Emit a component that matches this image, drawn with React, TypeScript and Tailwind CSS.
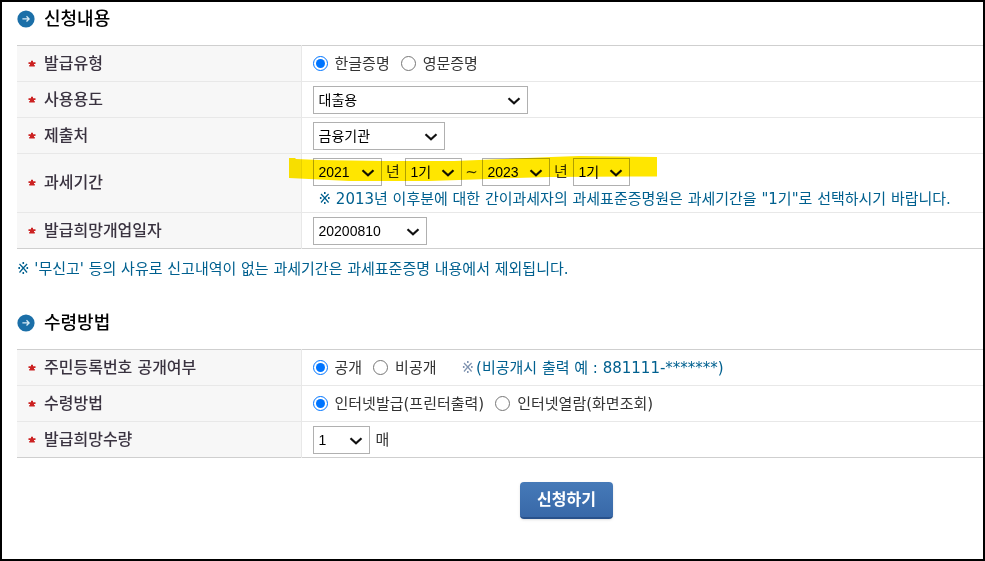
import { useState } from "react";
import type { ReactNode } from "react";

interface SelectProps {
  label: string;
  options: string[];
  className: string;
}

const Select = ({ label, options, className }: SelectProps) => {
  const [value, setValue] = useState(options[0]);

  return (
    <span className={`relative inline-flex h-7 ${className}`}>
      <select
        aria-label={label}
        value={value}
        onChange={(e) => setValue(e.target.value)}
        className="h-full w-full appearance-none border border-[#b0b0b0] bg-white pl-[5px] pr-5 font-['Liberation_Sans','Noto_Sans_CJK_KR',sans-serif] text-sm text-black"
      >
        {options.map((option) => (
          <option key={option}>{option}</option>
        ))}
      </select>
      <svg
        viewBox="0 0 14 8"
        className="pointer-events-none absolute right-[7px] top-[11px] h-2 w-3.5"
        fill="none"
        stroke="#111"
        strokeWidth="2.2"
      >
        <path d="M1.5 1.2 L7 6.2 L12.5 1.2" />
      </svg>
    </span>
  );
};

interface RadioProps {
  name: string;
  label: string;
  defaultChecked?: boolean;
}

const Radio = ({ name, label, defaultChecked }: RadioProps) => (
  <label className="flex items-center gap-[7px]">
    <input
      type="radio"
      name={name}
      defaultChecked={defaultChecked}
      className="h-[15px] w-[15px]"
    />
    {label}
  </label>
);

const SectionTitle = ({ children }: { children: ReactNode }) => (
  <h2 className="flex h-6 items-center gap-[9px] text-lg font-medium leading-6 text-black">
    <svg viewBox="0 0 18 18" className="h-[18px] w-[18px]">
      <circle cx="9" cy="9" r="8.6" fill="#1b6fa8" />
      <path
        d="M5.4 8.9 H12 M9.5 6.3 L12.1 8.9 L9.5 11.5"
        fill="none"
        stroke="#d9ecf6"
        strokeWidth="1.3"
      />
    </svg>
    {children}
  </h2>
);

const Row = ({ title, children }: { title: string; children: ReactNode }) => (
  <tr className="h-9 border-b border-[#e8e8e8] last:border-[#cfcfcf]">
    <th
      scope="row"
      className="w-[284px] border-r border-[#e8e8e8] bg-[#f7f7f7] pl-[11px] text-left text-base font-medium leading-6 text-[#3a3340]"
    >
      <span className="flex items-center gap-2">
        <svg viewBox="0 0 8 8" className="h-2 w-2" fill="#cc2222">
          <path d="M3 0.8 H5 V2.2 H7.5 V4 H6 V5 H6.8 V6.5 H1.2 V5 H2 V4 H0.5 V2.2 H3 Z" />
        </svg>
        {title}
      </span>
    </th>
    <td className="pl-[11px]">{children}</td>
  </tr>
);

const FormTable = ({ children }: { children: ReactNode }) => (
  <table className="w-full border-collapse border-t border-[#cfcfcf] text-[15px] leading-5 text-[#333]">
    <tbody>{children}</tbody>
  </table>
);

export default function App() {
  return (
    <main className="min-h-screen border-2 border-black bg-white pl-[15px] pt-[5px] font-['DejaVu_Sans','Noto_Sans_CJK_KR',sans-serif]">
      <form onSubmit={(e) => e.preventDefault()}>
        <SectionTitle>신청내용</SectionTitle>
        <div className="mt-3.5">
          <FormTable>
            <Row title="발급유형">
              <div className="flex items-center gap-[11px]">
                <Radio name="type" label="한글증명" defaultChecked />
                <Radio name="type" label="영문증명" />
              </div>
            </Row>
            <Row title="사용용도">
              <div className="flex">
                <Select
                  label="사용용도"
                  options={["대출용"]}
                  className="w-[215px]"
                />
              </div>
            </Row>
            <Row title="제출처">
              <div className="flex">
                <Select
                  label="제출처"
                  options={["금융기관"]}
                  className="w-[132px]"
                />
              </div>
            </Row>
            <Row title="과세기간">
              <div className="relative flex items-center pt-1">
                <Select
                  label="시작 연도"
                  options={["2021", "2022", "2023"]}
                  className="w-[69px]"
                />
                <span className="w-[23px] text-center">년</span>
                <Select
                  label="시작 기수"
                  options={["1기", "2기"]}
                  className="w-[57px]"
                />
                <span className="w-5 text-center">~</span>
                <Select
                  label="종료 연도"
                  options={["2023", "2022", "2021"]}
                  className="w-[68px]"
                />
                <span className="w-[23px] text-center">년</span>
                <Select
                  label="종료 기수"
                  options={["1기", "2기"]}
                  className="w-[57px]"
                />
                {/* marker stroke over the period selects */}
                <svg
                  viewBox="0 0 368 26"
                  className="pointer-events-none absolute -left-6 top-0.5 h-[26px] w-[368px] mix-blend-multiply"
                  fill="#ffe600"
                >
                  <path d="M0 2 L6 2 L7 3 L30 4 L95 5 L165 5 L215 3 L262 1 L290 0 L368 1 V20.500 H340 L260 21 L200 23 L140 25 L60 25 L0 22 Z" />
                </svg>
              </div>
              <p className="py-[3px] pl-1.5 text-[#00608f]">
                ※ 2013년 이후분에 대한 간이과세자의 과세표준증명원은 과세기간을
                "1기"로 선택하시기 바랍니다.
              </p>
            </Row>
            <Row title="발급희망개업일자">
              <div className="flex">
                <Select
                  label="발급희망개업일자"
                  options={["20200810"]}
                  className="w-[114px]"
                />
              </div>
            </Row>
          </FormTable>
        </div>
        <p className="mt-2.5 text-[15px] leading-5 text-[#00608f]">
          ※ '무신고' 등의 사유로 신고내역이 없는 과세기간은 과세표준증명
          내용에서 제외됩니다.
        </p>

        <div className="mt-8">
          <SectionTitle>수령방법</SectionTitle>
        </div>
        <div className="mt-3.5">
          <FormTable>
            <Row title="주민등록번호 공개여부">
              <div className="flex items-center gap-[11px]">
                <Radio name="open" label="공개" defaultChecked />
                <Radio name="open" label="비공개" />
                <span className="flex gap-0.5 pl-3.5 text-[#00608f]">
                  <span className="text-[#7f93b0]">※</span>
                  (비공개시 출력 예 : 881111-*******)
                </span>
              </div>
            </Row>
            <Row title="수령방법">
              <div className="flex items-center gap-[11px]">
                <Radio
                  name="method"
                  label="인터넷발급(프린터출력)"
                  defaultChecked
                />
                <Radio name="method" label="인터넷열람(화면조회)" />
              </div>
            </Row>
            <Row title="발급희망수량">
              <div className="flex items-center gap-1.5">
                <Select
                  label="발급희망수량"
                  options={["1", "2", "3"]}
                  className="w-[57px]"
                />
                매
              </div>
            </Row>
          </FormTable>
        </div>

        <div className="mt-6 flex justify-center pl-[133px]">
          <button
            type="submit"
            className="h-[37px] w-[93px] rounded border-b-2 border-[#28518b] bg-linear-to-b from-[#467ab8] to-[#3868a8] text-base font-bold text-white shadow-sm"
          >
            신청하기
          </button>
        </div>
      </form>
    </main>
  );
}
